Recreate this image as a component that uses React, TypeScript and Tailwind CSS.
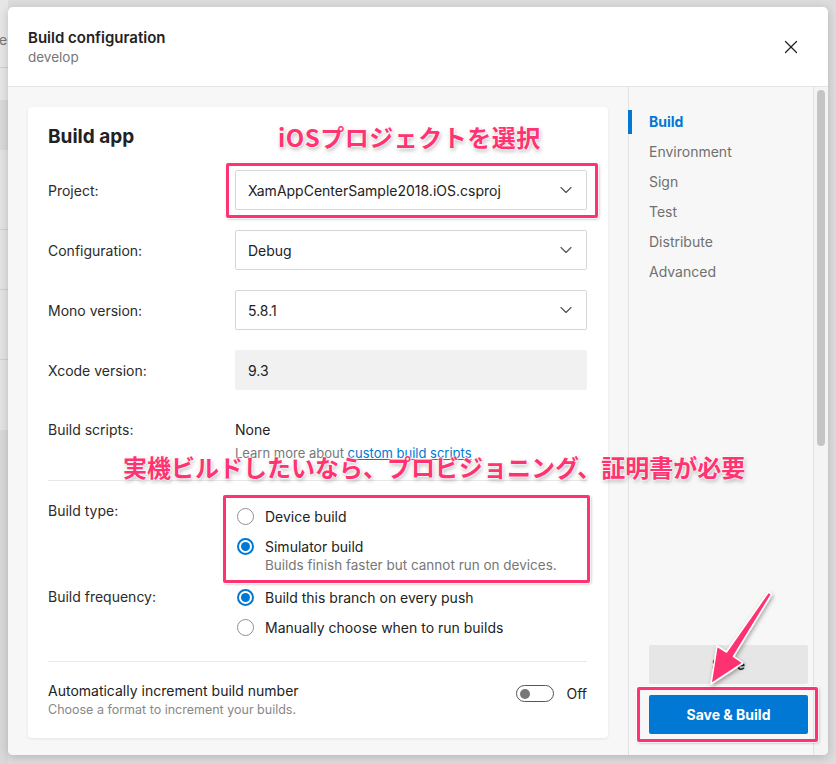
import { ChevronDown, X } from "lucide-react";

const font = { fontFamily: "Inter, 'Noto Sans', sans-serif" };
const jpFont = { fontFamily: "'Noto Sans CJK JP', 'Noto Sans', sans-serif" };

const noteText =
  "absolute whitespace-nowrap text-[24px] leading-[28px] font-bold text-[#ff3371] [text-shadow:0_0_2px_#fff,0_0_2px_#fff,0_0_3px_#fff,1px_2px_4px_rgba(0,0,0,0.35)]";
const noteBox =
  "pointer-events-none absolute rounded-[2px] border-[3px] border-[#ff3371] shadow-[0_0_0_1px_rgba(255,255,255,0.8),1px_1px_3px_rgba(0,0,0,0.3)]";

function Select({ value }: { value: string }) {
  return (
    <div className="flex h-[40px] w-[352px] items-center justify-between rounded-[2px] border border-[#d6d6d6] bg-white pl-[12px] pr-[10px] text-[14px] text-[#222]">
      <span>{value}</span>
      <ChevronDown size={20} strokeWidth={1.4} className="text-[#555]" />
    </div>
  );
}

function Radio({ checked }: { checked?: boolean }) {
  if (checked) {
    return (
      <span className="ml-[2px] flex h-[17px] w-[17px] shrink-0 items-center justify-center rounded-full border-2 border-[#0078d4] bg-white">
        <span className="h-[9px] w-[9px] rounded-full bg-[#0078d4]" />
      </span>
    );
  }
  return <span className="ml-[2px] h-[17px] w-[17px] shrink-0 rounded-full border border-[#8f8f8f] bg-white" />;
}

function RadioItem({ label, checked, sub }: { label: string; checked?: boolean; sub?: string }) {
  return (
    <div>
      <div className="flex h-[20px] items-center gap-[11px]">
        <Radio checked={checked} />
        <span className="text-[14px] text-[#222]">{label}</span>
      </div>
      {sub && <div className="pl-[30px] text-[13.5px] leading-[18px] text-[#777]">{sub}</div>}
    </div>
  );
}

const navItems = ["Build", "Environment", "Sign", "Test", "Distribute", "Advanced"];

export default function App() {
  return (
    <div className="relative flex h-[764px] w-[836px] overflow-hidden bg-[#dcdcdc]" style={font}>
      {/* page behind the modal */}
      <div className="flex w-[8px] shrink-0 flex-col overflow-hidden">
        <div className="h-[68px] border-b border-[#cfcfcf] bg-[#e6e6e6] pt-[30px] text-[14px] leading-[20px] text-[#777]">
          <span className="-ml-[1px]">er</span>
        </div>
        <div className="h-[32px] bg-[#e6e6e6]" />
        <div className="h-[50px] bg-[#d9d9d9]" />
        <div className="h-[80px] border-b border-[#cfcfcf] bg-[#e3e3e3]" />
        <div className="h-[60px] border-b border-[#cfcfcf] bg-[#e3e3e3]" />
        <div className="h-[70px] border-b border-[#cfcfcf] bg-[#e3e3e3]" />
        <div className="h-[70px] bg-[#e3e3e3]" />
        <div className="flex-1 bg-[#d8d8d8]" />
      </div>

      {/* modal */}
      <div className="mt-[7px] flex h-[748px] w-[820px] shrink-0 flex-col overflow-hidden rounded-[5px] bg-white shadow-[0_2px_10px_rgba(0,0,0,0.18)]">
        <div className="flex h-[80px] shrink-0 items-start justify-between border-b border-[#e4e4e4] pl-[20px] pr-[26px]">
          <div className="pt-[21px]">
            <div className="text-[15px] font-semibold leading-[20px] text-[#222]">Build configuration</div>
            <div className="text-[13.5px] leading-[18px] text-[#777]">develop</div>
          </div>
          <X size={22} strokeWidth={1.3} className="mt-[29px] text-[#222]" />
        </div>

        <div className="flex flex-1 bg-[#f7f7f7]">
          {/* main column */}
          <div className="w-[620px] shrink-0 px-[20px] pt-[20px]">
            <div className="h-[631px] rounded-[4px] bg-white pl-[20px] pr-[21px] pt-[18px] shadow-[0_1px_3px_rgba(0,0,0,0.08)]">
              <div className="text-[19px] font-bold leading-[24px] text-[#222]">Build app</div>

              <div className="mt-[21px] flex h-[40px] items-center">
                <div className="w-[187px] text-[14px] text-[#2b2b2b]">Project:</div>
                <div className="relative">
                  <Select value="XamAppCenterSample2018.iOS.csproj" />
                  <div className={`${noteBox} -bottom-[8px] -left-[9px] -right-[11px] -top-[7px]`} />
                </div>
              </div>
              <div className="mt-[20px] flex h-[40px] items-center">
                <div className="w-[187px] text-[14px] text-[#2b2b2b]">Configuration:</div>
                <Select value="Debug" />
              </div>
              <div className="mt-[20px] flex h-[40px] items-center">
                <div className="w-[187px] text-[14px] text-[#2b2b2b]">Mono version:</div>
                <Select value="5.8.1" />
              </div>
              <div className="mt-[20px] flex h-[40px] items-center">
                <div className="w-[187px] text-[14px] text-[#2b2b2b]">Xcode version:</div>
                <div className="flex h-[40px] w-[352px] items-center rounded-[2px] bg-[#f1f1f1] pl-[13px] text-[14px] text-[#222]">9.3</div>
              </div>

              <div className="mt-[30px] flex">
                <div className="w-[187px] text-[14px] leading-[20px] text-[#2b2b2b]">Build scripts:</div>
                <div>
                  <div className="text-[14px] leading-[20px] text-[#222]">None</div>
                  <div className="mt-[4px] text-[13px] leading-[18px] text-[#777]">
                    Learn more about <span className="text-[#0078d4] underline">custom build scripts</span>
                  </div>
                </div>
              </div>

              <div className="mt-[18px] h-px bg-[#e8e8e8]" />

              <div className="mt-[20px] flex">
                <div className="w-[187px] text-[14px] leading-[20px] text-[#2b2b2b]">Build type:</div>
                <div className="relative flex w-[352px] flex-col gap-[10px] pt-[5px]">
                  <RadioItem label="Device build" />
                  <RadioItem label="Simulator build" checked sub="Builds finish faster but cannot run on devices." />
                  <div className={`${noteBox} -bottom-[9px] -left-[12px] -right-[3px] -top-[6px]`} />
                </div>
              </div>

              <div className="mt-[13px] flex">
                <div className="w-[187px] text-[14px] leading-[20px] text-[#2b2b2b]">Build frequency:</div>
                <div className="flex flex-col gap-[10px]">
                  <RadioItem label="Build this branch on every push" checked />
                  <RadioItem label="Manually choose when to run builds" />
                </div>
              </div>

              <div className="mt-[24px] h-px bg-[#e8e8e8]" />

              <div className="mt-[19px] flex items-start justify-between">
                <div>
                  <div className="text-[14px] leading-[20px] text-[#222]">Automatically increment build number</div>
                  <div className="text-[12.5px] leading-[18px] text-[#888]">Choose a format to increment your builds.</div>
                </div>
                <div className="flex items-center gap-[12px] pt-[2px]">
                  <div className="flex h-[17px] w-[38px] items-center rounded-full border border-[#555] bg-white pl-[3px]">
                    <span className="h-[10px] w-[10px] rounded-full bg-[#777]" />
                  </div>
                  <span className="text-[14px] text-[#222]">Off</span>
                </div>
              </div>
            </div>
          </div>

          {/* side nav */}
          <div className="flex w-[185px] shrink-0 flex-col border-l border-[#e2e2e2] pb-[21px] pl-[20px] pr-[5px] pt-[25px]">
            <div className="flex flex-col gap-[10px]">
              {navItems.map((item, i) => (
                <div key={item} className="relative text-[14px] leading-[20px]">
                  {i === 0 && <span className="absolute -left-[21px] -top-[2px] h-[24px] w-[4px] bg-[#0078d4]" />}
                  <span className={i === 0 ? "font-bold text-[#0078d4]" : "text-[#707070]"}>{item}</span>
                </div>
              ))}
            </div>
            <div className="mt-auto flex flex-col gap-[11px]">
              <div className="flex h-[39px] items-center justify-center rounded-[2px] bg-[#e6e6e6] text-[14px] font-semibold text-[#222]">Save</div>
              <div className="relative">
                <div className="flex h-[39px] items-center justify-center rounded-[2px] bg-[#0078d4] text-[14px] font-bold text-white">Save &amp; Build</div>
                <div className={`${noteBox} -bottom-[8px] -left-[12px] -right-[10px] -top-[8px]`} />
              </div>
            </div>
          </div>

          {/* scrollbar */}
          <div className="w-[15px] shrink-0 border-l border-[#e2e2e2] bg-[#f4f4f4] pl-[3px] pt-[3px]">
            <div className="h-[356px] w-[8px] rounded-full bg-[#c4c4c4]" />
          </div>
        </div>
      </div>

      {/* annotations */}
      <div className={`${noteText} left-[278px] top-[123px] tracking-[0.5px]`} style={jpFont}>iOSプロジェクトを選択</div>
      <div className={`${noteText} left-[123px] top-[453px]`} style={jpFont}>実機ビルドしたいなら、プロビジョニング、証明書が必要</div>
      <svg className="pointer-events-none absolute left-0 top-0" width="836" height="764" viewBox="0 0 836 764">
        <defs>
          <filter id="sh" x="-20%" y="-20%" width="140%" height="140%">
            <feDropShadow dx="1" dy="2" stdDeviation="2" floodColor="#000" floodOpacity="0.35" />
          </filter>
        </defs>
        <polygon
          points="771.5,594.5 768.5,592 726.5,652 717,646 711,684 743,663 733.5,656.5"
          fill="#ff3371"
          stroke="#fff"
          strokeWidth="1.5"
          strokeLinejoin="round"
          filter="url(#sh)"
        />
      </svg>
    </div>
  );
}
